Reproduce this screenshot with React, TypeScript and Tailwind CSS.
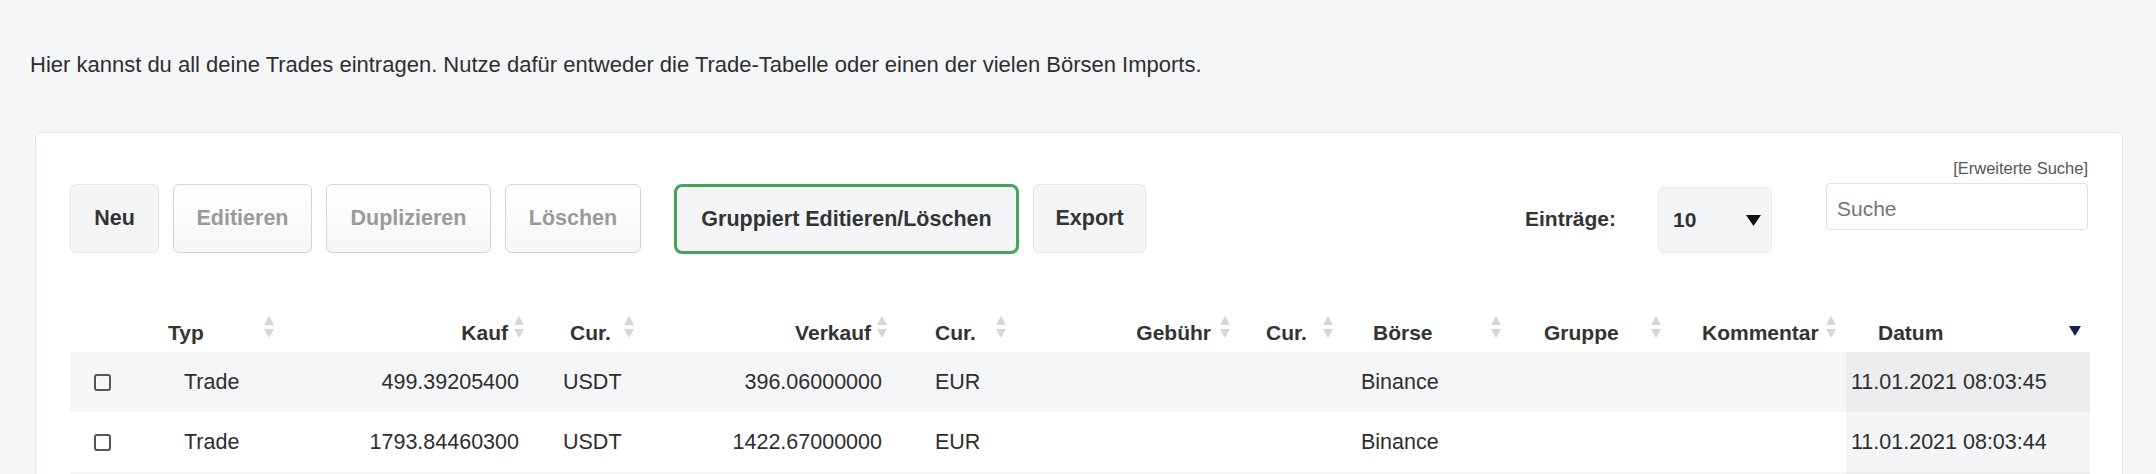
import React from "react";

const font = { fontFamily: '"Liberation Sans", Arial, sans-serif' };

function SortIcon() {
  return (
    <svg width="10" height="24" viewBox="0 0 10 24" className="shrink-0">
      <polygon points="0,10 5,1 10,10" fill="#d6d6d6" />
      <polygon points="0,14 10,14 5,23" fill="#d6d6d6" />
    </svg>
  );
}

function DescIcon() {
  return (
    <svg width="12" height="10" viewBox="0 0 12 10" className="shrink-0">
      <polygon points="0,0 12,0 6,10" fill="#15244f" />
    </svg>
  );
}

function Checkbox() {
  return <div className="w-[17px] h-[17px] rounded-[3px] border-2 border-[#555]" />;
}

type Row = { kauf: string; verkauf: string; datum: string };
const rows: Row[] = [
  { kauf: "499.39205400", verkauf: "396.06000000", datum: "11.01.2021 08:03:45" },
  { kauf: "1793.84460300", verkauf: "1422.67000000", datum: "11.01.2021 08:03:44" },
  { kauf: "", verkauf: "", datum: "" },
];

const grid = "grid grid-cols-[86px_125px_250px_115px_245px_120px_225px_105px_165px_160px_180px_244px]";

export default function App() {
  return (
    <div style={font} className="h-[474px] overflow-hidden bg-[#f5f6f8] text-[#2e2e2e]">
      <p className="pl-[30px] pt-[51px] text-[22px] leading-[28px] text-[#2e2e2e]">
        Hier kannst du all deine Trades eintragen. Nutze dafür entweder die Trade-Tabelle oder einen der vielen Börsen Imports.
      </p>

      <div className="mt-[53px] ml-[35px] w-[2088px] rounded-[6px] border border-[#e3e5e8] bg-white px-[34px] pt-[25px] pb-[40px]">
        <div className="text-right text-[16.5px] leading-[20px] text-[#555]">[Erweiterte Suche]</div>

        <div className="mt-[6px] flex items-start justify-between">
          <div className="flex items-start gap-[14px] text-[21.5px] font-bold">
            <button className="h-[69px] w-[89px] rounded-[6px] border border-[#e4e6e9] bg-[#f4f5f7] text-[#333]">Neu</button>
            <button className="h-[69px] w-[139px] rounded-[6px] border border-[#d4d4d4] bg-gradient-to-b from-white to-[#f6f6f6] text-[#9a9a9a]">Editieren</button>
            <button className="h-[69px] w-[165px] rounded-[6px] border border-[#d4d4d4] bg-gradient-to-b from-white to-[#f6f6f6] text-[#9a9a9a]">Duplizieren</button>
            <button className="h-[69px] w-[136px] rounded-[6px] border border-[#d4d4d4] bg-gradient-to-b from-white to-[#f6f6f6] text-[#9a9a9a]">Löschen</button>
            <button className="ml-[19px] h-[70px] w-[345px] rounded-[8px] border-[3px] border-[#46a35b] bg-[#f4f5f7] text-[#333]">Gruppiert Editieren/Löschen</button>
            <button className="h-[69px] w-[113px] rounded-[6px] border border-[#e4e6e9] bg-[#f4f5f7] text-[#333]">Export</button>
          </div>

          <div className="flex items-start">
            <div className="flex h-[69px] items-center text-[21px] font-bold text-[#333]">Einträge:</div>
            <div className="ml-[42px] mt-[3px] flex h-[66px] w-[114px] items-center justify-between rounded-[6px] border border-[#e8e9eb] bg-[#f4f5f7] pl-[14px] pr-[10px]">
              <span className="text-[21px] font-bold text-[#333]">10</span>
              <svg width="15" height="11" viewBox="0 0 15 11">
                <polygon points="0,0 15,0 7.5,11" fill="#111" />
              </svg>
            </div>
            <div className="ml-[54px] -mt-[1px] h-[47px] w-[262px] rounded-[4px] border border-[#dcdfe3] bg-white pl-[10px] pt-[12px] text-[21px] leading-[26px] text-[#757575]">
              Suche
            </div>
          </div>
        </div>

        <div className="mt-[48px] text-[21px] font-bold text-[#333]">
          <div className={`${grid} h-[50px]`}>
            <div />
            <HeadL label="Typ" pl="pl-[12px]" pr="pr-[7px]" />
            <HeadR label="Kauf" pr="pr-[7px]" gap="gap-[6px]" />
            <HeadL label="Cur." pl="pl-[39px]" pr="pr-[12px]" />
            <HeadR label="Verkauf" pr="pr-[4px]" gap="gap-[6px]" />
            <HeadL label="Cur." pl="pl-[44px]" pr="pr-[5px]" />
            <HeadR label="Gebühr" pr="pr-[6px]" gap="gap-[9px]" />
            <HeadL label="Cur." pl="pl-[30px]" pr="pr-[8px]" />
            <HeadL label="Börse" pl="pl-[32px]" pr="pr-[5px]" />
            <HeadL label="Gruppe" pl="pl-[38px]" pr="pr-[5px]" />
            <HeadL label="Kommentar" pl="pl-[36px]" pr="pr-[10px]" />
            <div className="flex items-end justify-between pl-[32px] pr-[9px]">
              <span className="pb-[6px] leading-[26px]">Datum</span>
              <div className="mb-[16px]"><DescIcon /></div>
            </div>
          </div>
        </div>

        <div className="text-[21.5px] text-[#2e2e2e]">
          {rows.map((r, i) => {
            const odd = i % 2 === 0;
            return (
              <div key={i} className={`${grid} h-[60px] items-stretch ${odd ? "bg-[#f5f6f8]" : "bg-white"}`}>
                <div className="flex items-center pl-[24px]">{r.datum && <Checkbox />}</div>
                <div className="flex items-center pl-[28px]">{r.datum && "Trade"}</div>
                <div className="flex items-center justify-end pr-[12px]">{r.kauf}</div>
                <div className="flex items-center pl-[32px]">{r.datum && "USDT"}</div>
                <div className="flex items-center justify-end pr-[9px]">{r.verkauf}</div>
                <div className="flex items-center pl-[44px]">{r.datum && "EUR"}</div>
                <div />
                <div />
                <div className="flex items-center pl-[20px]">{r.datum && "Binance"}</div>
                <div />
                <div />
                <div className={`flex items-center pl-[5px] ${odd ? "bg-[#ebedef]" : "bg-[#f4f5f7]"}`}>{r.datum}</div>
              </div>
            );
          })}
        </div>
      </div>
    </div>
  );
}

function HeadL({ label, pl, pr }: { label: string; pl: string; pr: string }) {
  return (
    <div className={`flex items-end justify-between ${pl} ${pr}`}>
      <span className="pb-[6px] leading-[26px]">{label}</span>
      <div className="mb-[13px]"><SortIcon /></div>
    </div>
  );
}

function HeadR({ label, pr, gap }: { label: string; pr: string; gap: string }) {
  return (
    <div className={`flex items-end justify-end ${pr} ${gap}`}>
      <span className="pb-[6px] leading-[26px]">{label}</span>
      <div className="mb-[13px]"><SortIcon /></div>
    </div>
  );
}
